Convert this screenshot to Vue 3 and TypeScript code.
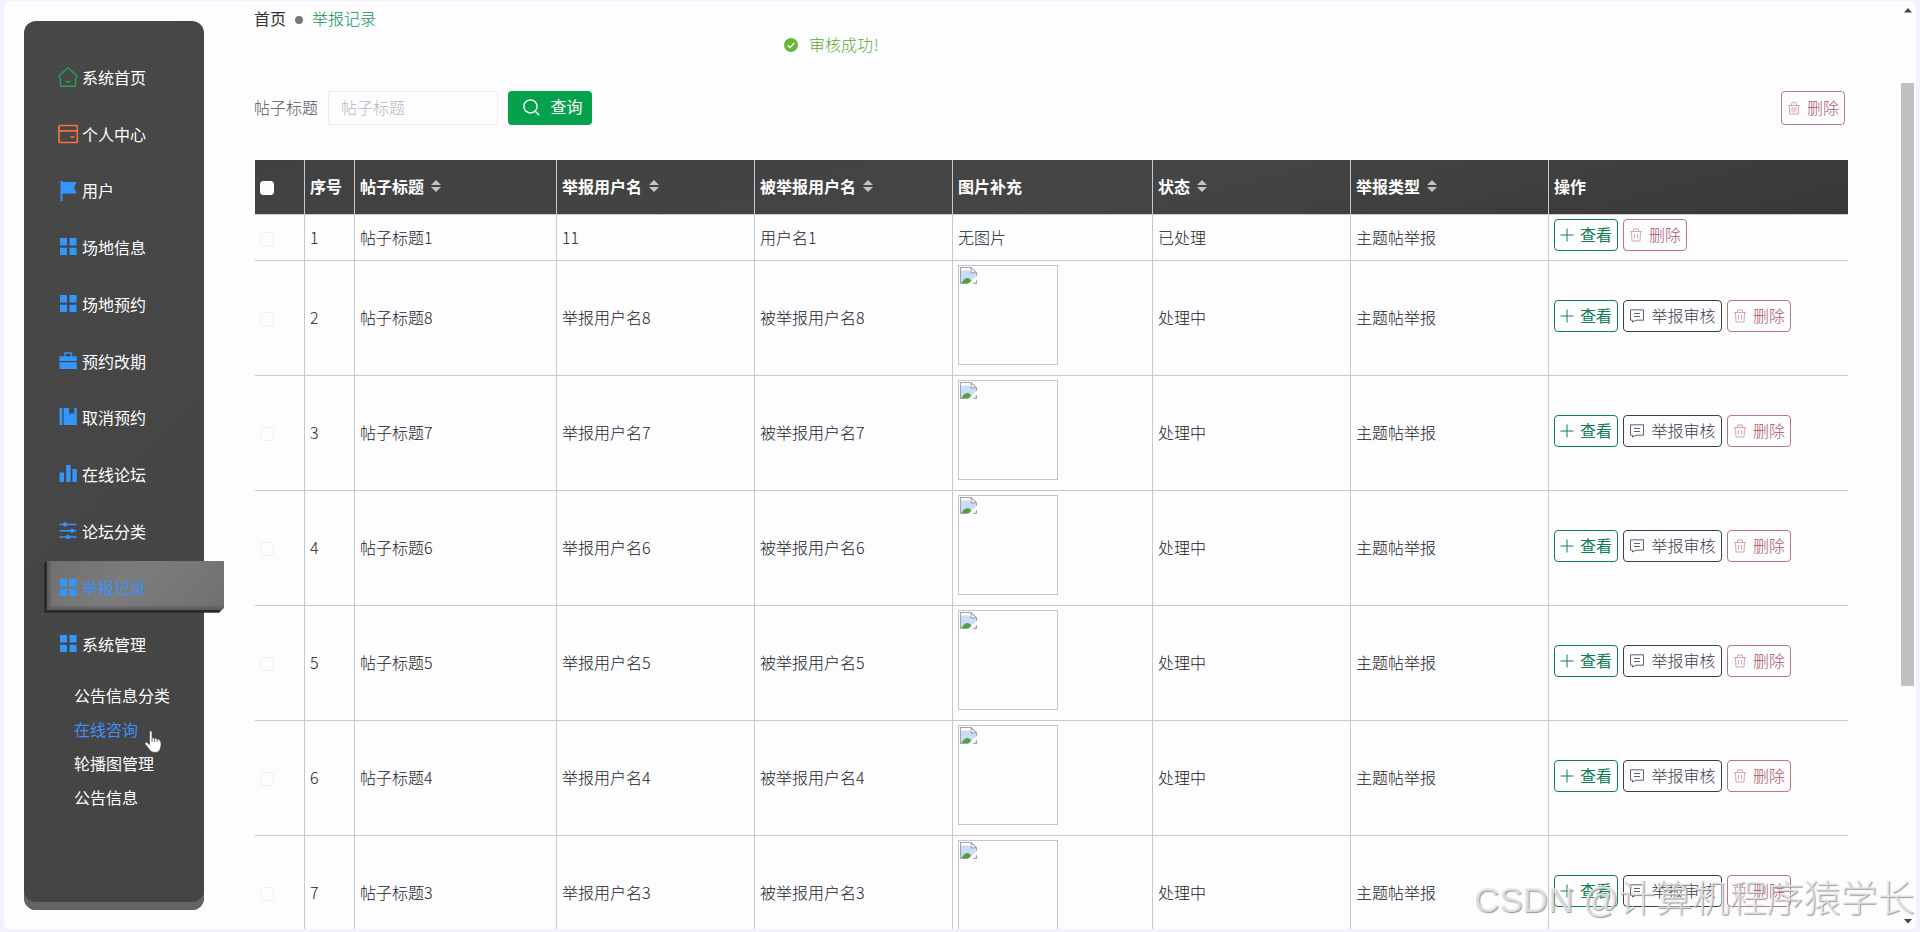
<script setup lang="ts">
interface MenuItem { label: string; icon: string; active?: boolean }
interface Column { label: string; sortable?: boolean }
interface Row { id: number; title: string; reporter: string; reported: string; done?: boolean }

const menu: MenuItem[] = [
  { label: '系统首页', icon: 'home' },
  { label: '个人中心', icon: 'card' },
  { label: '用户', icon: 'flag' },
  { label: '场地信息', icon: 'grid' },
  { label: '场地预约', icon: 'grid' },
  { label: '预约改期', icon: 'case' },
  { label: '取消预约', icon: 'book' },
  { label: '在线论坛', icon: 'bars' },
  { label: '论坛分类', icon: 'sliders' },
  { label: '举报记录', icon: 'grid', active: true },
  { label: '系统管理', icon: 'grid' },
]
const subMenu = ['公告信息分类', '在线咨询', '轮播图管理', '公告信息']
const columns: Column[] = [
  { label: '序号' },
  { label: '帖子标题', sortable: true },
  { label: '举报用户名', sortable: true },
  { label: '被举报用户名', sortable: true },
  { label: '图片补充' },
  { label: '状态', sortable: true },
  { label: '举报类型', sortable: true },
  { label: '操作' },
]
const rows: Row[] = [
  { id: 1, title: '帖子标题1', reporter: '11', reported: '用户名1', done: true },
  ...[8, 7, 6, 5, 4, 3].map((n, i) => ({
    id: i + 2,
    title: `帖子标题${n}`,
    reporter: `举报用户名${n}`,
    reported: `被举报用户名${n}`,
  })),
]
</script>

<template>
  <div class="page">
    <div class="panel">
      <aside class="sidebar">
        <nav>
          <a v-for="m in menu" :key="m.label" class="item" :class="{ active: m.active }">
            <svg v-if="m.icon === 'home'" class="ico green" viewBox="0 0 20 20"><path d="M1.500 8.200 10 1l8.500 7.200V11l-1 .4V18a1.200 1.200 0 0 1-1.200 1.200H3.700A1.200 1.200 0 0 1 2.500 18v-6.600l-1-.4zM7.500 14q2.500 1.500 5 0" /></svg>
            <svg v-else-if="m.icon === 'card'" class="ico orange" viewBox="0 0 20 20"><path d="M2.200 1.500h16a1.200 1.200 0 0 1 1.200 1.200v14.600a1.200 1.200 0 0 1-1.200 1.200h-16A1.200 1.200 0 0 1 1 17.300V2.700a1.200 1.200 0 0 1 1.200-1.200zM1 6.900h18.400M12.300 13H16.500" /></svg>
            <svg v-else-if="m.icon === 'flag'" class="ico blue" viewBox="0 0 20 20"><path d="M2.500 0H4.500V1H18.700L16 6.500 18.700 12.500H4.500V20H2.500z" /></svg>
            <svg v-else-if="m.icon === 'grid'" class="ico blue" viewBox="0 0 20 20"><path d="M2 1h7v7.500H2zM11.500 1h7v7.500h-7zM2 10.800h7V18H2zM11.500 10.800h7V18h-7z" /></svg>
            <svg v-else-if="m.icon === 'case'" class="ico blue" viewBox="0 0 20 20"><path d="M1.500 5.200H6.300V1.200H14.200V5.200H18.800V10.100H1.500zM7.800 2.700V5.200h4.900V2.700zM1.500 11.300H18.800V18H1.500z" fill-rule="evenodd" /></svg>
            <svg v-else-if="m.icon === 'book'" class="ico blue" viewBox="0 0 20 20"><path d="M1.500 1H4.500V18H1.500zM5.700 1H11.200V7.500L14 5.700 16.300 7.500V1H18.800V18H5.700z" /></svg>
            <svg v-else-if="m.icon === 'bars'" class="ico blue" viewBox="0 0 20 20"><path d="M1.500 8.500H6V18H1.500zM8.200 1h4.400v17H8.200zM14.400 5h4.400v13h-4.400z" /></svg>
            <svg v-else class="ico lines" viewBox="0 0 20 20"><path d="M1.500 3.500h17M1.500 9.800h17M1.500 16h17" /><circle cx="7" cy="3.500" r="1.400" /><circle cx="14" cy="9.800" r="1.400" /><circle cx="10" cy="16" r="1.400" /></svg>
            <span>{{ m.label }}</span>
          </a>
        </nav>
        <div class="sub">
          <a v-for="s in subMenu" :key="s" :class="{ hover: s === '在线咨询' }">{{ s }}</a>
        </div>
      </aside>

      <main class="main">
        <div class="crumb"><b>首页</b><i></i><span>举报记录</span></div>
        <div class="filter">
          <label>帖子标题</label>
          <div class="input">帖子标题</div>
          <button class="search">
            <svg viewBox="0 0 16 16"><circle cx="7" cy="7" r="6.200" /><path d="m11.300 11.300 4 4" /></svg><span>查询</span>
          </button>
          <button class="btn red bulk">
            <svg viewBox="0 0 14 14"><path d="M1 4.500h12M2.500 4.500v8.500h9V4.500M4.500 4V2.500L7 1l2.500 1.500V4M5 6v5.500M7 6v5.500M9 6v5.500" /></svg><span>删除</span>
          </button>
        </div>

        <div class="grid head">
          <div class="cell"><span class="check"></span></div>
          <div v-for="c in columns" :key="c.label" class="cell">
            {{ c.label }}
            <svg v-if="c.sortable" class="sort" viewBox="0 0 10 12"><path d="M5 0 10 5H0zM5 12l5-5H0z" /></svg>
          </div>
        </div>
        <div v-for="r in rows" :key="r.id" class="grid row" :class="{ short: r.done }">
          <div class="cell pick"><span class="check"></span></div>
          <div class="cell">{{ r.id }}</div>
          <div class="cell">{{ r.title }}</div>
          <div class="cell">{{ r.reporter }}</div>
          <div class="cell">{{ r.reported }}</div>
          <div class="cell">
            <template v-if="r.done">无图片</template>
            <div v-else class="thumb">
              <svg viewBox="0 0 16 16">
                <path d="M.5.500h10l5 5v10H.5z" fill="#fff" />
                <path d="M1 4q6-3 14 3v8H1z" fill="#c9dcf8" />
                <path d="M1 15.500q6-9 10-2v2z" fill="#4fa33a" />
                <path d="M.5.500h10l5 5v10H.5zM10.500.500v5h5" fill="none" stroke="#a3a3a3" />
                <path d="M7.500 16 16 8v4l-4 4z" fill="#fdfcff" />
              </svg>
            </div>
          </div>
          <div class="cell">{{ r.done ? '已处理' : '处理中' }}</div>
          <div class="cell">主题帖举报</div>
          <div class="cell ops">
            <button class="btn teal"><svg viewBox="0 0 14 14"><path d="M7 .5v13M.5 7h13" /></svg><span>查看</span></button>
            <button v-if="!r.done" class="btn gray"><svg class="wide" viewBox="0 0 16 14"><path d="M1.500.800h13v10.400H7L3.500 13v-1.800h-2zM5 4.500h6M5 7.500h6" /></svg><span>举报审核</span></button>
            <button class="btn red"><svg viewBox="0 0 14 14"><path d="M1 3.500h12M2.500 3.500l.5 9.500h8l.5-9.500M4.500 3V1h5v2M5.500 6v4.500M8.500 6v4.500" /></svg><span>删除</span></button>
          </div>
        </div>
      </main>
    </div>

    <div class="toast">
      <svg viewBox="0 0 14 14"><circle cx="7" cy="7" r="7" fill="#67b83a" /><path d="m3.800 7.200 2.300 2.200 4.200-4.300" fill="none" stroke="#fff" stroke-width="1.400" /></svg><span>审核成功<span class="bang">!</span></span>
    </div>
    <div class="track"></div>
    <svg class="arrow" viewBox="0 0 8 5"><path d="M0 0h8L4 4.500z" /></svg>
    <svg class="arrow up" viewBox="0 0 8 5"><path d="M0 4.500h8L4 0z" /></svg>
    <svg class="hand" viewBox="0 0 18 23"><path d="M5.500 1.500q1.500-1.300 2.500 0V8q1.500-.8 2.500.5 1.700-.8 2.500.7 2-.5 2.800 1.300L17 12v4q-.5 4-3 6-4.500 1.200-7-.5L1 14q-.3-2 1.500-1.700l3 2.200z" fill="#fff" stroke="#444" stroke-width=".7" /><path d="M8 8v4M10.600 8.500V12M13.200 9.500V12" stroke="#444" stroke-width=".8" /></svg>
    <div class="mark">CSDN @<span>计算机程序猿学长</span></div>
  </div>
</template>

<style>
body { margin: 0; overflow: hidden; }
</style>
<style scoped>
* { box-sizing: border-box; }
.page { position: relative; height: 932px; padding: 1px 4px 3px; overflow: hidden; background: #f3f1fe; font: 300 16px/20px "Noto Sans CJK SC", sans-serif; color: #222; }
.panel { display: flex; height: 928px; padding-left: 20px; overflow: hidden; background: #fdfcff; border-radius: 6px; }
.sidebar { flex: none; width: 180px; height: 889px; margin-top: 20px; padding-top: 29.600px; color: #fff; background: linear-gradient(135deg, #484848, #444); border-radius: 12px; box-shadow: inset 0 -8px 0 #636363; font-weight: 400; }
.item { display: flex; align-items: center; height: 52px; margin: 0 -20px 4.700px 20px; padding-left: 13.500px; gap: 4.500px; }
.item span { margin-top: 1px; }
.item.active { color: #3c90f8; background: linear-gradient(135deg, #707070, #7c7c7c 45%, #707070); box-shadow: inset 3px -3px 3px #5c5c5c; border-left: 3px solid #2b2b2b; border-bottom: 3px solid #2b2b2b; padding: 3px 0 0 10.500px; clip-path: polygon(3px 0, 100% 0, 100% calc(100% - 5px), calc(100% - 5px) 100%, 0 100%, 0 3px); }
.ico { flex: none; width: 20px; height: 20px; margin-top: 1.500px; }
.green { margin-top: 0; }
.blue { fill: #3296fb; }
.green, .orange { fill: none; stroke: #1ba75b; stroke-width: 1.400; }
.orange { stroke: #f9723d; stroke-width: 1.700; }
.lines { fill: #3296fb; stroke: #3296fb; stroke-width: 1.500; }
.sub { display: flex; flex-direction: column; padding: 3.500px 0 0 50px; }
.sub a { height: 34px; line-height: 34px; }
.sub .hover { color: #3c90f8; }
.main { flex: none; width: 1593px; margin-left: 51px; }
.crumb { display: flex; align-items: center; height: 34px; margin-left: -1px; }
.crumb b { font-weight: 400; color: #333; }
.crumb i { width: 8px; height: 8px; margin: 4px 9px 0 9px; background: #777; border-radius: 50%; }
.crumb span { color: #0a9450; }
.filter { display: flex; align-items: center; height: 34px; margin: 56px 3px 35px 0; }
.filter label { width: 74px; margin: -3px 0 0 -1px; color: #555; }
.input { width: 170px; height: 34px; padding-left: 12px; line-height: 30px; color: #b9b8bd; border: 1px solid #edecf0; }
button { font-family: inherit; font-size: 16px; line-height: 20px; }
.search { display: flex; align-items: center; justify-content: center; width: 84px; height: 34px; margin-left: 10px; padding: 0 0 0 6px; gap: 10px; color: #fff; font-weight: 400; background: #05a14b; border: 0; border-radius: 4px; }
.search svg { width: 17px; height: 17px; margin-top: -1px; fill: none; stroke: #fff; stroke-width: 1.300; }
.search span { margin-top: -4px; }
.grid { display: grid; grid-template-columns: 50px 50px 202px 198px 198px 200px 198px 198px 299px; }
.cell { display: flex; align-items: center; padding-left: 5px; border-right: 1px solid #c9c8cc; }
.cell:last-child { border-right: 0; }
.head { height: 55px; color: #fff; font-weight: 700; background: linear-gradient(165deg, #414141, #454545 55%, #383838); border-bottom: 1px solid #c9c8cc; }
.head .cell { padding-bottom: 2px; }
.head .cell:first-child { padding: 1px 0 0 5px; }
.sort { width: 10px; height: 12px; margin-left: 7px; fill: #c3c2c8; }
.row { height: 115px; border-bottom: 1px solid #c9c8cc; }
.row.short { height: 46px; }
.row .check { border-color: #f1f0f3; }
.row .cell { padding-bottom: 2px; }
.row .pick { padding-top: 2px; padding-bottom: 0; }
.check { width: 14px; height: 14px; background: #fdfcff; border: 1px solid #fff; border-radius: 3px; }
.thumb { width: 100px; height: 100px; margin-top: -4px; padding: 1px; border: 1px solid #c6c6c6; }
.thumb svg { display: block; width: 17px; height: 17px; }
.row .ops { gap: 5px; padding-bottom: 4px; }
.row.short .ops { padding-bottom: 5px; }
.btn { display: flex; align-items: center; justify-content: center; width: 64px; height: 32px; padding: 0; gap: 6px; font-weight: 300; background: transparent; border: 1px solid; border-radius: 4px; }
.btn span { margin-top: -3px; }
.btn svg { width: 14px; height: 14px; margin-top: -1px; fill: none; stroke: currentColor; stroke-width: 1; }
.btn svg.wide { width: 16px; }
.teal { color: #0c8050; font-weight: 400; }
.gray { width: 99px; color: #3d3d44; }
.gray svg { opacity: .8; }
.red { color: #a9555f; border-color: #b87880; }
.red svg { opacity: .5; }
.bulk { height: 34px; margin-left: auto; }
.toast { position: absolute; left: 784px; top: 35px; display: flex; align-items: center; gap: 11px; color: #57ac2c; }
.toast > span { margin-top: -1px; }
.bang { margin-left: 1px; }
.toast svg { width: 14px; height: 14px; }
.track { position: absolute; left: 1901px; top: 83px; width: 13px; height: 603px; background: #c1c1c3; }
.arrow { position: absolute; left: 1904px; top: 919px; width: 8px; height: 5px; fill: #444; }
.arrow.up { top: 8px; }
.hand { position: absolute; left: 144px; top: 730px; width: 18px; height: 23px; fill: none; }
.mark { position: absolute; left: 1474px; top: 876px; font: 300 35px/48px "Liberation Sans", "Noto Sans CJK SC", sans-serif; white-space: nowrap; color: rgba(235, 235, 238, .8); text-shadow: 1px 1px 1px #999; }
.mark span { font-size: 37px; }
</style>
